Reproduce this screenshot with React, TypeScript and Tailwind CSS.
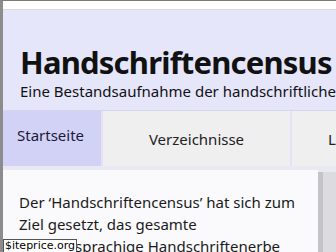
export default function App() {
  return (
    <div
      className="relative w-[336px] h-[252px] overflow-hidden bg-white border-t border-[#7a7a7a] border-l-[3px] border-l-[#8c8c8c]"
      style={{ fontFamily: "'Noto Sans', 'Open Sans', sans-serif" }}
    >
      {/* top strip */}
      <div className="h-[9px] bg-white border-b border-[#d8d8e0]" />

      {/* header */}
      <header className="bg-[#e6e6fb] h-[100px] pl-[17px] pt-[35px]">
        <h1 className="text-[31px] leading-[34px] font-bold text-[#111] whitespace-nowrap tracking-[-0.8px]">
          Handschriftencensus
        </h1>
        <p className="text-[15px] leading-[18px] text-[#111] whitespace-nowrap mt-[3px]">
          Eine Bestandsaufnahme der handschriftlichen Überlieferung
        </p>
      </header>

      {/* tabs */}
      <nav className="flex gap-[2px] h-[56px] bg-[#e3e3f5] border-t border-[#d6d6ec]">
        <div className="w-[98px] shrink-0 bg-[#d2d2f6] pl-[14px] pt-[13px] text-[15px] text-[#1a1a3a]">
          Startseite
        </div>
        <div className="w-[187px] shrink-0 bg-[#efeff0] flex items-center justify-center text-[15px] text-[#222] pt-[2px]">
          Verzeichnisse
        </div>
        <div className="flex-1 bg-[#efeff0] pl-[36px] flex items-center text-[15px] text-[#222] pt-[2px] whitespace-nowrap">
          Literatur
        </div>
      </nav>

      {/* content */}
      <div className="flex bg-[#e9e9f4] pt-[4px]">
        <main className="w-[315px] shrink-0 bg-[#fafafd] pl-[16px] pt-[21px] text-[15px] leading-[22px] text-[#1a1a1a] whitespace-nowrap">
          <p>
            Der ‘Handschriftencensus’ hat sich zum
            <br />
            Ziel gesetzt, das gesamte
            <br />
            deutschsprachige Handschriftenerbe
          </p>
        </main>
        <div className="w-[5px] bg-[#c4c4c8] mt-[2px]" />
        <div className="flex-1 bg-[#dcdce0] mt-[2px]" />
      </div>

      {/* watermark */}
      <div className="absolute left-0 bottom-[-1px] bg-white border border-[#555] px-[1px] text-[11px] leading-[12px] text-black font-['DejaVu_Sans']">
        $iteprice.org
      </div>
    </div>
  );
}
